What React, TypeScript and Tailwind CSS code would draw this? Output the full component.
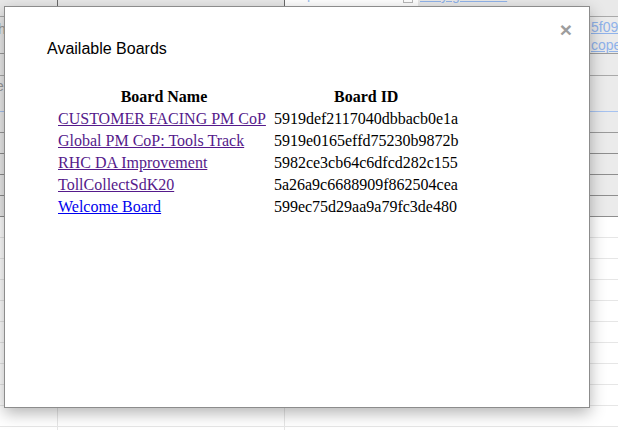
import React from 'react';

const boards = [
  { name: 'CUSTOMER FACING PM CoP', id: '5919def2117040dbbacb0e1a', visited: true },
  { name: 'Global PM CoP: Tools Track', id: '5919e0165effd75230b9872b', visited: true },
  { name: 'RHC DA Improvement', id: '5982ce3cb64c6dfcd282c155', visited: true },
  { name: 'TollCollectSdK20', id: '5a26a9c6688909f862504cea', visited: true },
  { name: 'Welcome Board', id: '599ec75d29aa9a79fc3de480', visited: false },
];

// rows of the sheet behind the dialog
const greyRows = [
  { h: 'h-[22px]', line: 'border-[#a9a9a9]' },
  { h: 'h-[36px]', line: 'border-[#a6c2f0]' },
  { h: 'h-[21px]', line: 'border-[#9a9a9a]' },
  { h: 'h-[21px]', line: 'border-[#8e8e8e]' },
  { h: 'h-[21px]', line: 'border-[#8e8e8e]' },
  { h: 'h-[21px]', line: 'border-[#8e8e8e]' },
  { h: 'h-[21px]', line: 'border-[#8e8e8e]' },
];

function SheetBackground() {
  return (
    <div className="flex flex-col font-['Liberation_Sans',Arial,sans-serif] text-[14px]">
      {/* top row, mostly scrolled off */}
      <div className="flex h-[37px] -mt-[20px] border-b border-[#a9a9a9] bg-[#e9e9e9]">
        <div className="w-[58px] border-r border-[#6a6a6a]" />
        <div className="w-[227px] border-r border-[#6a6a6a] flex items-end justify-center pb-[10px] text-[#8a8a8a]">5</div>
        <div className="w-[133px] bg-white flex items-end pb-[11px] pl-[22px] text-[#9bbcee]">
          <span>p</span>
          <span className="ml-[88px] w-[10px] h-[10px] border border-[#b8b8b8] mb-[2px]" />
        </div>
        <div className="flex-1 flex items-end pb-[10px] pl-[2px] text-[#8fb2ea] underline whitespace-nowrap">/Key/generate</div>
      </div>
      {/* two line cell */}
      <div className="flex h-[37px] border-b border-[#9c9c9c] bg-[#ebebeb]">
        <div className="w-[58px] border-r border-[#c4c4c4] text-[#9a9a9a] pt-[2px] -indent-[6px] overflow-hidden">th</div>
        <div className="w-[227px] border-r border-[#c4c4c4]" />
        <div className="flex-1 pl-[306px] pt-[1px] leading-[18px] text-[#8fb2ea] whitespace-nowrap overflow-hidden">
          <div className="underline">5f0946</div>
          <div className="underline">copes</div>
        </div>
      </div>
      {greyRows.map((r, i) => (
        <div key={i} className={`flex ${r.h} border-b ${r.line} bg-[#ebebeb]`}>
          <div className="w-[58px] border-r border-[#c4c4c4] text-[#9a9a9a] -indent-[4px] overflow-hidden">{i === 1 ? 'e' : ''}</div>
          <div className="w-[227px] border-r border-[#c4c4c4]" />
          <div className="flex-1" />
        </div>
      ))}
      {Array.from({ length: 12 }).map((_, i) => (
        <div key={'w' + i} className="flex h-[21px] border-b border-[#e6e6e6] bg-white">
          <div className="w-[58px] border-r border-[#e6e6e6]" />
          <div className="w-[227px] border-r border-[#e6e6e6]" />
          <div className="flex-1" />
        </div>
      ))}
    </div>
  );
}

export default function App() {
  return (
    <div className="relative w-[618px] h-[430px] overflow-hidden bg-white">
      <SheetBackground />

      <div className="absolute left-[4px] top-[6px] w-[586px] h-[402px] bg-white border border-[#8c8c8c] shadow-[0_5px_15px_rgba(0,0,0,0.3)]">
        <button className="absolute top-[12px] right-[17px] font-['Liberation_Sans',Arial,sans-serif] font-bold text-[21px] leading-[21px] text-[#9d9d9d]">
          ×
        </button>
        <div className="pl-[42px] pt-[33px]">
          <h4 className="font-['Liberation_Sans',Arial,sans-serif] text-[16px] leading-[18px] text-black">Available Boards</h4>
          <table className="mt-[27px] ml-[8px] border-separate border-spacing-[2px] font-['Liberation_Serif','Times_New_Roman',serif] text-[16px] leading-[18px] text-black">
            <thead>
              <tr>
                <th className="p-px text-center font-bold">Board Name</th>
                <th className="p-px text-center font-bold">Board ID</th>
              </tr>
            </thead>
            <tbody>
              {boards.map(b => (
                <tr key={b.id}>
                  <td className="py-px pl-px pr-[5px] whitespace-nowrap">
                    <a href="#" className={`underline ${b.visited ? 'text-[#551a8b]' : 'text-[#0000ee]'}`}>{b.name}</a>
                  </td>
                  <td className="p-px whitespace-nowrap">{b.id}</td>
                </tr>
              ))}
            </tbody>
          </table>
        </div>
      </div>
    </div>
  );
}
